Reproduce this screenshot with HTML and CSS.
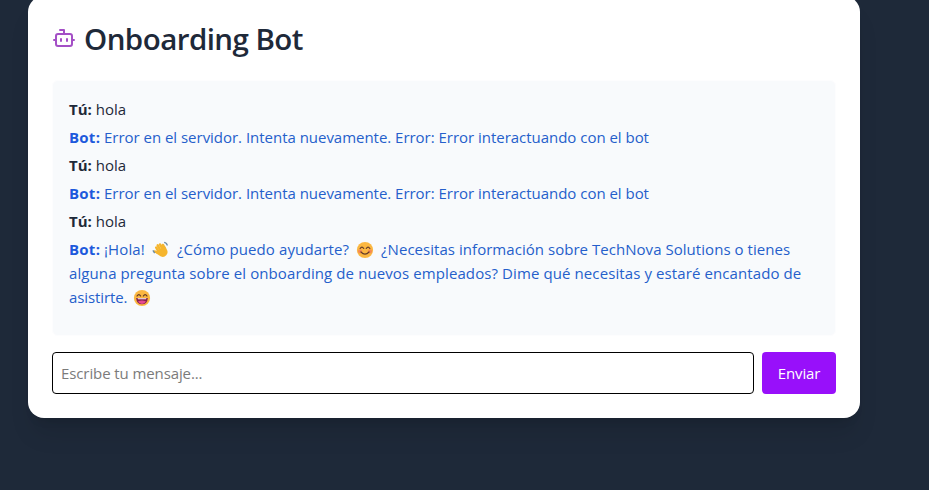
FILE: index.html
```html
<!DOCTYPE html>
<html lang="es">
<head>
<meta charset="utf-8">
<title>Onboarding Bot</title>
<link rel="stylesheet" href="styles.css">
</head>
<body>
<main class="card">
  <h1 class="title">
    <svg class="bot-icon" viewBox="0 0 24 24" aria-hidden="true"><path d="M12 8V4H8"/><rect width="16" height="12" x="4" y="8" rx="2"/><path d="M2 14h2M20 14h2M15 13v2M9 13v2"/></svg>
    <span>Onboarding Bot</span>
  </h1>
  <section class="chat">
    <p class="msg"><strong>Tú:</strong> hola</p>
    <p class="msg bot"><strong>Bot:</strong> Error en el servidor. Intenta nuevamente. Error: Error interactuando con el bot</p>
    <p class="msg"><strong>Tú:</strong> hola</p>
    <p class="msg bot"><strong>Bot:</strong> Error en el servidor. Intenta nuevamente. Error: Error interactuando con el bot</p>
    <p class="msg"><strong>Tú:</strong> hola</p>
    <p class="msg bot"><strong>Bot:</strong> <span class="loose">¡Hola! <svg class="emoji" viewBox="0 0 20 20"><g transform="rotate(-28 10 10)" fill="none" stroke="#f5b52e" stroke-linecap="round" stroke-width="2.6"><path d="M6.5 11V5M9.2 10V3.5M12 10V4M14.6 11V6"/><path d="M5 10.5l-2-2.5"/><path fill="#f5b52e" d="M6.4 10h8.2v3.2a4 4 0 0 1-7 2.4L5 11z"/></g><path d="M1 10.500l2 3M13.500 1.500q3 .5 3.500 3.500" fill="none" stroke="#6c8ca8" stroke-width="1.500"/></svg> ¿Cómo puedo ayudarte? <svg class="emoji" viewBox="0 0 20 20"><circle cx="10" cy="10" r="9" fill="#fbb741"/><circle cx="4.5" cy="11.5" r="2.3" fill="#f58b55"/><circle cx="15.5" cy="11.5" r="2.3" fill="#f58b55"/><path d="M4.6 8.3q2-3 4 0M11.4 8.3q2-3 4 0M5.5 12.2q4.5 4.8 9 0" fill="none" stroke="#633b29" stroke-width="1.3" stroke-linecap="round"/></svg> <span class="end">¿Necesitas información sobre TechNova Solutions o tienes</span></span><br><span class="looser">alguna pregunta sobre el onboarding de nuevos empleados? Dime qué necesitas y estaré encantado de</span><br><span class="tight">asistirte.</span> <svg class="emoji emoji-last" viewBox="0 0 20 20"><circle cx="10" cy="10" r="9" fill="#fbb741"/><path d="M4.5 7.8q2-3 4 0M11.5 7.8q2-3 4 0" fill="none" stroke="#633b29" stroke-width="1.4" stroke-linecap="round"/><path d="M3.5 10h13q-.6 7-6.5 7t-6.5-7z" fill="#84204b"/><path d="M5 10.300h10l-.6 1H5.600z" fill="#fff"/><path d="M5.500 14q4.500-2.300 9 0-1.500 2.700-4.500 2.700t-4.500-2.700z" fill="#e64a91"/></svg></p>
  </section>
  <form class="composer">
    <input class="field" type="text" placeholder="Escribe tu mensaje...">
    <button class="send" type="button">Enviar</button>
  </form>
</main>
</body>
</html>
```
FILE: styles.css
```css
* { box-sizing: border-box; }
body {
  margin: 0;
  height: 490px;
  overflow: hidden;
  background: #1e2939;
  color: #1e2939;
  font: 16px/24px "Open Sans", "Noto Sans", sans-serif;
}
.card {
  width: 832px;
  height: 422px;
  margin: -4px 0 0 28px;
  padding: 24px;
  border-radius: 16px;
  background: #fff;
  box-shadow: 0 20px 25px -5px rgb(0 0 0 / .1), 0 8px 10px -6px rgb(0 0 0 / .1);
}
.title {
  display: flex;
  gap: 8px;
  height: 40px;
  margin: 0 0 20px;
  font-size: 29.5px;
  line-height: 38px;
  font-weight: 600;
  letter-spacing: -.55px;
  white-space: nowrap;
}
.bot-icon {
  width: 24px;
  height: 24px;
  margin-top: 6px;
  fill: none;
  stroke: #a44fc6;
  stroke-width: 2;
  stroke-linecap: round;
  stroke-linejoin: round;
}
.chat {
  height: 256px;
  padding: 16px;
  border: 1px solid #fdfdfe;
  border-radius: 6px;
  background: #f8fafc;
  font-size: 15px;
}
.msg {
  margin: 0 0 4px;
  white-space: nowrap;
}
.bot {
  color: #255fcb;
  letter-spacing: -.025px;
}
.bot strong {
  color: #1d59dc;
  letter-spacing: .25px;
}
.loose { letter-spacing: .12px; }
.end { letter-spacing: .04px; }
.looser { letter-spacing: .1px; }
.tight { letter-spacing: -.1px; }
.emoji {
  width: 18px;
  height: 18px;
  margin: 0 3px;
  vertical-align: -4px;
}
.emoji-last { margin-left: 2px; }
.composer {
  display: flex;
  gap: 8px;
  margin-top: 16px;
}
.field {
  flex: 1;
  height: 42px;
  padding: 8px;
  border: 1px solid #000;
  border-radius: 4px;
  font: inherit;
  font-size: 15px;
  letter-spacing: -.1px;
}
.field::placeholder { color: #7b7b7b; }
.send {
  width: 74px;
  height: 42px;
  padding: 0;
  border: 0;
  border-radius: 4px;
  background: #9810fa;
  color: #fff;
  font: inherit;
  font-size: 15px;
  letter-spacing: -.1px;
}
```
